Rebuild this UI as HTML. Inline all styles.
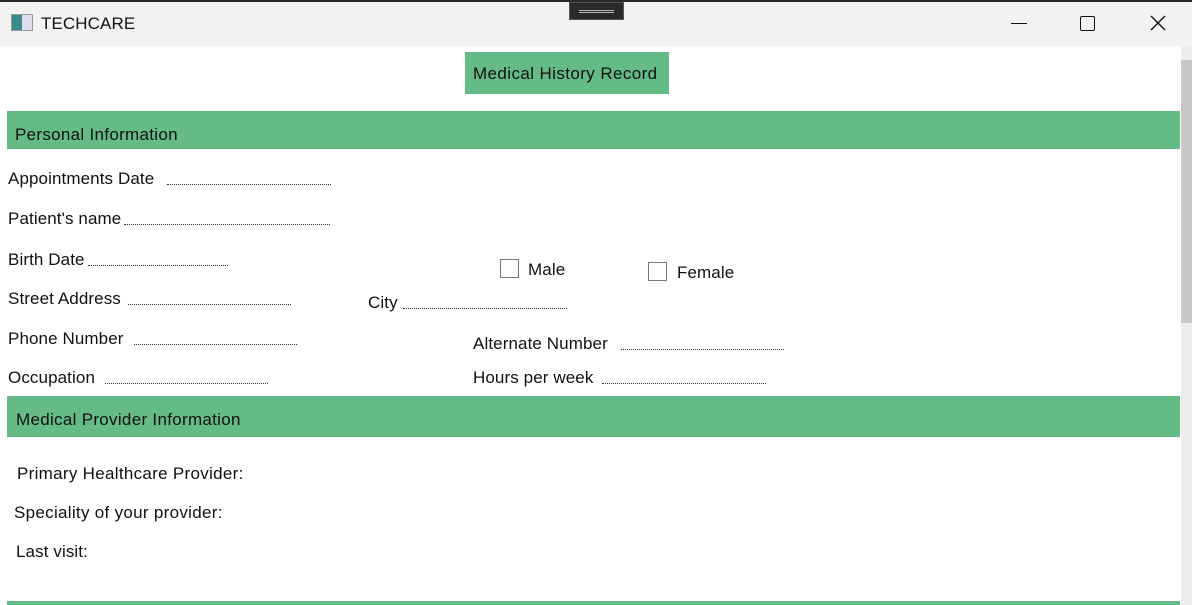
<!DOCTYPE html>
<html><head><style>
*{margin:0;padding:0;box-sizing:border-box}
body{width:1192px;height:605px;overflow:hidden;background:#fff;font-family:"Liberation Sans",sans-serif;color:#111;position:relative}
.a{position:absolute;font-size:17px;line-height:20px;white-space:nowrap;letter-spacing:0.1px}
.d{position:absolute;border-bottom:1.5px dotted #333;height:2px}
.g{position:absolute;background:#64bb85}
.cb{position:absolute;width:19px;height:19px;border:1px solid #777;background:#fff}
</style></head><body>
<div style="position:absolute;left:0;top:0;width:1192px;height:46px;background:#f2f2f3;border-top:2px solid #2a2a2a"></div>
<div style="position:absolute;left:569px;top:2px;width:55px;height:18px;background:#2a2a2a;border:1px solid #555"><div style="margin:7px 9px;border-top:1px solid #bbb;border-bottom:1px solid #bbb;height:3px"></div></div>
<div style="position:absolute;left:11px;top:14px;width:22px;height:17px;border:1px solid #999;background:linear-gradient(90deg,#3a8a8a 0 50%,#dde 50%)"></div>
<div class="a" style="left:41px;top:14px;font-size:17px">TECHCARE</div>
<div style="position:absolute;left:1011px;top:23px;width:16px;border-top:1px solid #111"></div>
<div style="position:absolute;left:1080px;top:16px;width:15px;height:15px;border:1.5px solid #111;border-radius:2px"></div>
<svg style="position:absolute;left:1150px;top:15px" width="16" height="16"><path d="M1 1L15 15M15 1L1 15" stroke="#111" stroke-width="1.4"/></svg>
<div style="position:absolute;left:1181px;top:46px;width:11px;height:559px;background:#ededed"></div>
<div style="position:absolute;left:1181px;top:60px;width:11px;height:263px;background:#c8c8c8"></div>
<div class="g" style="left:465px;top:52px;width:204px;height:42px"></div>
<div class="a" style="left:473px;top:64px;font-size:17px;letter-spacing:0.4px">Medical History Record</div>
<div class="g" style="left:7px;top:111px;width:1173px;height:38px"></div>
<div class="a" style="left:15px;top:125px;letter-spacing:0.3px">Personal Information</div>
<div class="a" style="left:8px;top:169px">Appointments Date</div><div class="d" style="left:167px;top:183px;width:164px"></div>
<div class="a" style="left:8px;top:209px">Patient's name</div><div class="d" style="left:124px;top:223px;width:206px"></div>
<div class="a" style="left:8px;top:250px">Birth Date</div><div class="d" style="left:88px;top:264px;width:140px"></div>
<div class="cb" style="left:500px;top:259px"></div>
<div class="a" style="left:528px;top:260px">Male</div>
<div class="cb" style="left:648px;top:262px"></div>
<div class="a" style="left:677px;top:263px">Female</div>
<div class="a" style="left:8px;top:289px">Street Address</div><div class="d" style="left:128px;top:303px;width:163px"></div>
<div class="a" style="left:368px;top:293px">City</div><div class="d" style="left:403px;top:307px;width:164px"></div>
<div class="a" style="left:8px;top:329px">Phone Number</div><div class="d" style="left:134px;top:343px;width:163px"></div>
<div class="a" style="left:473px;top:334px">Alternate Number</div><div class="d" style="left:621px;top:348px;width:163px"></div>
<div class="a" style="left:8px;top:368px">Occupation</div><div class="d" style="left:105px;top:382px;width:163px"></div>
<div class="a" style="left:473px;top:368px">Hours per week</div><div class="d" style="left:602px;top:382px;width:164px"></div>
<div class="g" style="left:7px;top:396px;width:1173px;height:41px"></div>
<div class="a" style="left:16px;top:410px;letter-spacing:0.3px">Medical Provider Information</div>
<div class="a" style="left:17px;top:464px;letter-spacing:0.3px">Primary Healthcare Provider:</div>
<div class="a" style="left:14px;top:503px;letter-spacing:0.3px">Speciality of your provider:</div>
<div class="a" style="left:16px;top:542px">Last visit:</div>
<div class="g" style="left:7px;top:601px;width:1173px;height:4px"></div>
</body></html>
